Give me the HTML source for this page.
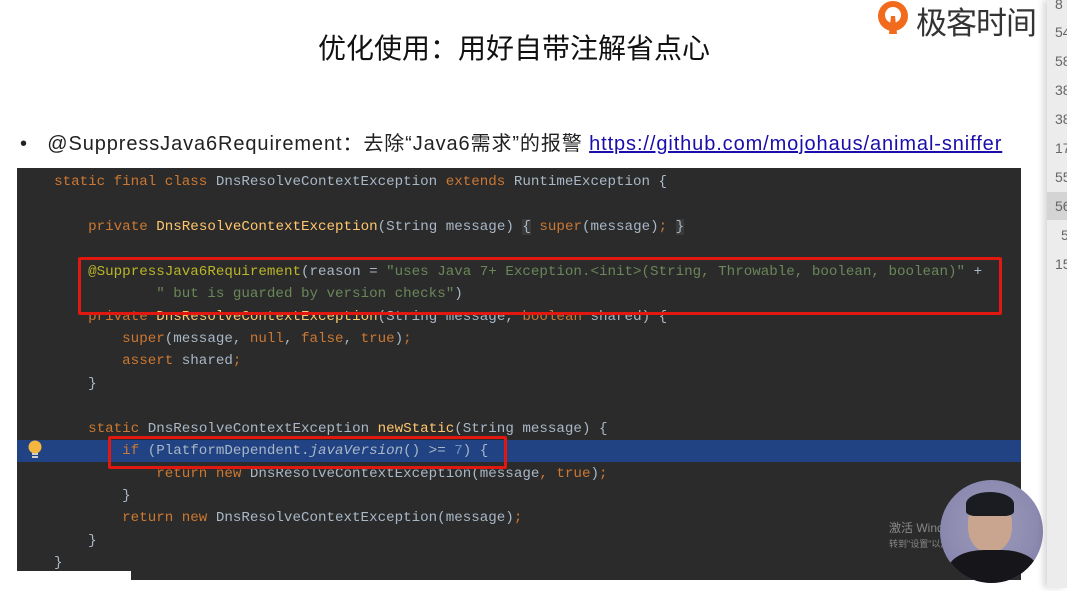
<!DOCTYPE html>
<html><head><meta charset="utf-8"><style>
body{margin:0;width:1067px;height:588px;background:#fff;position:relative;overflow:hidden;font-family:"Liberation Sans","Noto Sans CJK SC",sans-serif}
.t{position:absolute;left:318px;top:27px;font-size:28px;letter-spacing:0;color:#111;white-space:nowrap;font-family:"Noto Sans CJK SC",sans-serif}
.b{position:absolute;left:20px;top:127px;font-size:20px;letter-spacing:0.9px;color:#222;white-space:nowrap;font-family:"Liberation Sans","Noto Sans CJK SC",sans-serif}
.b a{color:#1a0dab;text-decoration:underline}
.code{position:absolute;left:17px;top:168px;width:1004px;height:412px;background:#2b2b2b}
.cut{position:absolute;left:0;top:571px;width:131px;height:20px;background:#fff}
.l{position:absolute;left:3px;width:1001px;height:22px;font-family:"Liberation Mono",monospace;font-size:14.2px;line-height:22px;color:#a9b7c6;white-space:pre}
.k{color:#cc7832}.s{color:#6a8759}.a{color:#bbb529}.m{color:#ffc66d}.n{color:#6897bb}.i{font-style:italic}
.hl{background:#214283;left:0;width:1004px;padding-left:3px;box-sizing:border-box}
.box{position:absolute;border:3px solid #e0180f;border-radius:2px}
.side{position:absolute;left:1047px;top:0;width:20px;height:588px;background:#ececec;box-shadow:-4px 0 6px rgba(0,0,0,.15);font-family:"Liberation Sans",sans-serif;font-size:14px;color:#666}
.side div{position:absolute;left:8px}
.logo{position:absolute;left:876px;top:0;width:160px;height:36px}
</style></head><body>
<div class="t">优化使用：用好自带注解省点心</div>
<div class="b">•&nbsp;&nbsp;&nbsp;@SuppressJava6Requirement：去除“Java6需求”的报警 <a>https://github.com/mojohaus/animal-sniffer</a></div>
<div class="logo">
<svg width="36" height="36" viewBox="0 0 36 36"><circle cx="17" cy="16" r="15" fill="#f26b1d"/><circle cx="17" cy="15" r="8" fill="#fff"/><path d="M15 16 L19 16 L21 34 L13 34 Z" fill="#f26b1d"/></svg>
<span style="position:absolute;left:40px;top:-2px;font-size:31px;color:#333;font-family:'Noto Sans CJK SC',sans-serif;letter-spacing:-1px">极客时间</span>
</div>
<div class="code">
<div class="l" style="top:3px">    <span class="k">static final class</span> DnsResolveContextException <span class="k">extends</span> RuntimeException {</div>
<div class="l" style="top:48px">        <span class="k">private</span> <span class="m">DnsResolveContextException</span>(String message) <span style="background:#3a3a3a">{</span> <span class="k">super</span>(message)<span class="k">;</span> <span style="background:#3a3a3a">}</span></div>
<div class="l" style="top:93px">        <span class="a">@SuppressJava6Requirement</span>(reason = <span class="s">"uses Java 7+ Exception.&lt;init&gt;(String, Throwable, boolean, boolean)"</span> +</div>
<div class="l" style="top:115px">                <span class="s">" but is guarded by version checks"</span>)</div>
<div class="l" style="top:138px">        <span class="k">private</span> <span class="m">DnsResolveContextException</span>(String message, <span class="k">boolean</span> shared) {</div>
<div class="l" style="top:160px">            <span class="k">super</span>(message, <span class="k">null</span>, <span class="k">false</span>, <span class="k">true</span>)<span class="k">;</span></div>
<div class="l" style="top:182px">            <span class="k">assert</span> shared<span class="k">;</span></div>
<div class="l" style="top:205px">        }</div>
<div class="l" style="top:250px">        <span class="k">static</span> DnsResolveContextException <span class="m">newStatic</span>(String message) {</div>
<div class="l hl" style="top:272px">            <span class="k">if</span> (PlatformDependent.<span class="i">javaVersion</span>() &gt;= <span class="n">7</span>) {</div>
<div class="l" style="top:295px">                <span class="k">return new</span> DnsResolveContextException(message<span class="k">,</span> <span class="k">true</span>)<span class="k">;</span></div>
<div class="l" style="top:317px">            }</div>
<div class="l" style="top:339px">            <span class="k">return new</span> DnsResolveContextException(message)<span class="k">;</span></div>
<div class="l" style="top:362px">        }</div>
<div class="l" style="top:384px">    }</div>
<svg style="position:absolute;left:10px;top:271px" width="16" height="22"><circle cx="8" cy="8" r="6.5" fill="#f4b63f"/><rect x="5" y="14" width="6" height="2" fill="#ccc"/><rect x="5" y="17" width="6" height="2" fill="#ccc"/></svg>
</div>
<div class="cut"></div>
<div class="box" style="left:78px;top:257px;width:918px;height:52px"></div>
<div class="box" style="left:108px;top:436px;width:393px;height:27px"></div>
<div style="position:absolute;left:889px;top:519px;font-size:12px;color:#888;font-family:'Liberation Sans','Noto Sans CJK SC',sans-serif">激活 Windows<br><span style="font-size:9px">转到"设置"以激活 Windows。</span></div>
<div style="position:absolute;left:940px;top:480px;width:103px;height:103px;border-radius:50%;background:radial-gradient(circle at 50% 45%,#9c9ab8 0,#8c8ab0 60%,#7d7aa5 100%);overflow:hidden">
<div style="position:absolute;left:28px;top:18px;width:44px;height:54px;border-radius:45%;background:#c9a48e"></div>
<div style="position:absolute;left:26px;top:12px;width:48px;height:24px;border-radius:50% 50% 20% 20%;background:#1b1b22"></div>
<div style="position:absolute;left:8px;top:70px;width:90px;height:50px;border-radius:40% 40% 0 0;background:#15151a"></div>
</div>
<div class="side">
<div style="top:-4px">8</div><div style="top:24px">54</div><div style="top:53px">58</div><div style="top:82px">38</div><div style="top:111px">38</div><div style="top:140px">17</div><div style="top:169px">55</div><div style="top:192px;left:0;width:20px;height:28px;background:#d4d4d4"></div><div style="top:198px">56</div><div style="top:227px;left:14px">5</div><div style="top:256px">15</div>
</div>
</body></html>
